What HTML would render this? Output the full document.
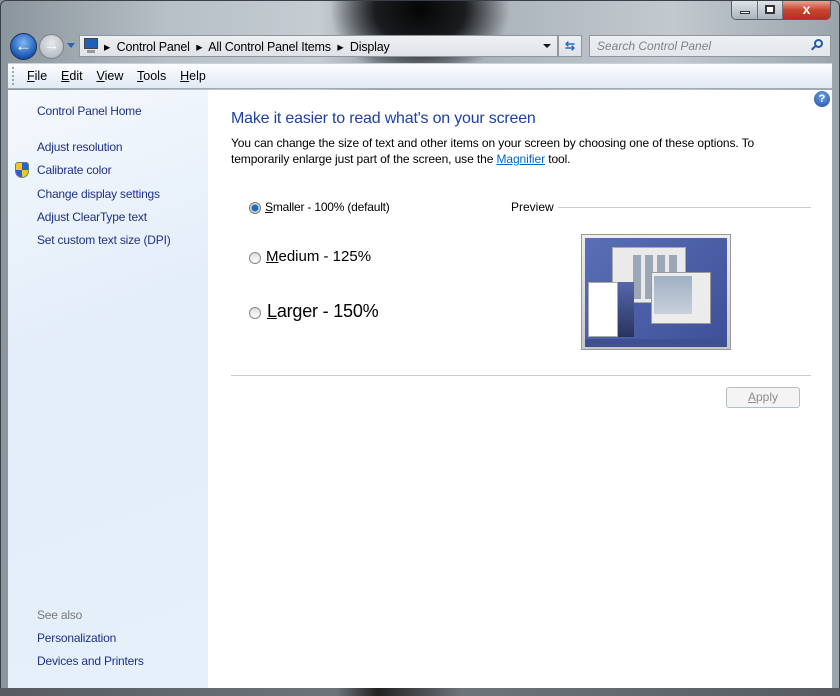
<!DOCTYPE html>
<html><head><style>
*{margin:0;padding:0;box-sizing:border-box}
body{width:840px;height:696px;overflow:hidden;font-family:"Liberation Sans",sans-serif;font-size:12px;position:relative;
background:radial-gradient(ellipse 90px 70px at 420px 10px,#050505 0%,#1a1c1e 50%,rgba(60,64,68,0) 100%),linear-gradient(90deg,#8a949c 0%,#b7c0c7 20%,#c5ccd2 38%,#9aa2a9 45%,#aeb6bd 60%,#c2c9cf 80%,#9aa4ac 100%);}
.abs{position:absolute}
.t{white-space:nowrap}
a{color:#0066cc}
.side a,.side div{position:absolute;left:37px;color:#1e3287;white-space:nowrap;font-size:12px;letter-spacing:-0.2px}
</style></head><body>
<div class="abs" style="left:0;top:0;width:840px;height:696px;border:1px solid #3a4048;border-radius:6px 6px 0 0"></div>
<div class="abs" style="left:0;top:688px;width:840px;height:8px;background:linear-gradient(90deg,#555b61,#6d747a 40%,#222 45%,#6d747a 55%,#555b61)"></div>
<div class="abs" style="left:731px;top:1px;width:100px;height:19px;border:1px solid #555d66;border-top:none;border-radius:0 0 5px 5px;overflow:hidden;display:flex">
 <div style="width:26px;background:linear-gradient(#dfe4e9,#a9b3bd);border-right:1px solid #6b737c;position:relative"><div class="abs" style="left:8px;top:10px;width:10px;height:3px;background:#fff;border:1px solid #333"></div></div>
 <div style="width:25px;background:linear-gradient(#dfe4e9,#a9b3bd);border-right:1px solid #6b737c;position:relative"><div class="abs" style="left:7px;top:4px;width:10px;height:9px;border:2px solid #333;background:#fff"></div></div>
 <div style="flex:1;background:linear-gradient(#e8a493,#c8452e 50%,#b3321d);color:#fff;font-weight:bold;font-size:14px;text-align:center;line-height:17px">x</div>
</div>
<div class="abs" style="left:10px;top:33px;width:27px;height:27px;border-radius:50%;background:radial-gradient(circle at 50% 35%,#7fb6f0,#1a56b8 70%,#0d2f75);border:1px solid #1c2f5a;color:#fff;font-weight:bold;font-size:17px;text-align:center;line-height:24px">&#8592;</div>
<div class="abs" style="left:39px;top:34px;width:25px;height:25px;border-radius:50%;background:radial-gradient(circle at 50% 35%,#e6e9ec,#aab1b8);border:1px solid #7c848c;color:#fff;font-size:15px;text-align:center;line-height:22px">&#8594;</div>
<div class="abs" style="left:67px;top:43px;width:0;height:0;border-left:4px solid transparent;border-right:4px solid transparent;border-top:5px solid #2e62b3"></div>
<div class="abs" style="left:79px;top:35px;width:479px;height:22px;background:linear-gradient(#eef0f2,#dfe3e7);border:1px solid #8e979f"></div>
<div class="abs" style="left:84px;top:38px;width:14px;height:11px;background:#1f5fb8;border:1px solid #444"></div>
<div class="abs" style="left:87px;top:50px;width:8px;height:3px;background:#999"></div>
<div class="abs t" style="left:104px;top:39px;font-size:12.5px;color:#000;letter-spacing:-0.2px">▸&nbsp; Control Panel &nbsp;▸&nbsp; All Control Panel Items &nbsp;▸&nbsp; Display</div>
<div class="abs" style="left:543px;top:44px;border-left:4px solid transparent;border-right:4px solid transparent;border-top:4px solid #111"></div>
<div class="abs" style="left:558px;top:35px;width:24px;height:22px;background:linear-gradient(#eef0f2,#dfe3e7);border:1px solid #8e979f;color:#2c6bc4;font-size:12px;text-align:center;line-height:20px;font-weight:bold">⇆</div>
<div class="abs" style="left:589px;top:35px;width:242px;height:22px;background:linear-gradient(#eef0f2,#e2e6ea);border:1px solid #8e979f"></div>
<div class="abs t" style="left:597px;top:39px;font-style:italic;color:#7d848a;font-size:12px">Search Control Panel</div>
<div class="abs" style="left:814px;top:39px;width:9px;height:9px;border:2px solid #1f5aa8;border-radius:50%"></div>
<div class="abs" style="left:811px;top:47px;width:5px;height:2px;background:#1f5aa8;transform:rotate(-45deg)"></div>
<div class="abs" style="left:8px;top:63px;width:824px;height:26px;background:linear-gradient(#fbfcfe,#e1e9f4);border-bottom:1px solid #a0aab5;border-top:1px solid #c9d2dc"></div>
<div class="abs" style="left:12px;top:67px;width:2px;height:18px;border-left:2px dotted #9aa"></div>
<div class="abs t" style="left:27px;top:69px;font-size:12.5px;color:#000"><u>F</u>ile&nbsp;&nbsp;&nbsp; <u>E</u>dit&nbsp;&nbsp;&nbsp; <u>V</u>iew&nbsp;&nbsp;&nbsp; <u>T</u>ools&nbsp;&nbsp;&nbsp; <u>H</u>elp</div>
<div class="abs" style="left:8px;top:90px;width:200px;height:598px;background:linear-gradient(160deg,#f4f8fd,#e3edf9 40%,#e6f0fb)"></div>
<div class="side">
<a style="top:104px">Control Panel Home</a>
<a style="top:140px">Adjust resolution</a>
<a style="top:163px">Calibrate color</a>
<a style="top:187px">Change display settings</a>
<a style="top:210px">Adjust ClearType text</a>
<a style="top:233px">Set custom text size (DPI)</a>
<div style="top:608px;color:#777">See also</div>
<a style="top:631px">Personalization</a>
<a style="top:654px">Devices and Printers</a>
</div>
<div class="abs" style="left:15px;top:162px;width:14px;height:16px;border-radius:3px 3px 7px 7px;background:conic-gradient(#2a62c8 0 25%,#f2c81e 0 50%,#2a62c8 0 75%,#f2c81e 0);border:1px solid #6b7a99"></div>
<div class="abs" style="left:208px;top:90px;width:624px;height:598px;background:#fff"></div>
<div class="abs" style="left:814px;top:91px;width:16px;height:16px;border-radius:50%;background:radial-gradient(circle at 50% 35%,#6fa3e8,#1b4fa3);color:#fff;font-weight:bold;font-size:11px;text-align:center;line-height:16px">?</div>
<div class="abs t" style="left:231px;top:110px;font-size:16px;color:#1e3fa8;letter-spacing:-0.2px">Make it easier to read what's on your screen</div>
<div class="abs" style="left:231px;top:135px;width:560px;font-size:12px;line-height:16px;color:#000;letter-spacing:-0.1px">You can change the size of text and other items on your screen by choosing one of these options. To temporarily enlarge just part of the screen, use the <a style="text-decoration:underline">Magnifier</a> tool.</div>
<div class="abs" style="left:249px;top:202px;width:12px;height:12px;border-radius:50%;border:1px solid #777;background:radial-gradient(circle,#1c6fb5 0 3px,#ddd 4px)"></div>
<div class="abs t" style="left:265px;top:200px;font-size:12px;letter-spacing:-0.2px"><u>S</u>maller - 100% (default)</div>
<div class="abs" style="left:249px;top:252px;width:12px;height:12px;border-radius:50%;border:1px solid #888;background:linear-gradient(#ddd,#fff)"></div>
<div class="abs t" style="left:266px;top:248px;font-size:15px"><u>M</u>edium - 125%</div>
<div class="abs" style="left:249px;top:307px;width:12px;height:12px;border-radius:50%;border:1px solid #888;background:linear-gradient(#ddd,#fff)"></div>
<div class="abs t" style="left:267px;top:301px;font-size:18px;letter-spacing:-0.2px"><u>L</u>arger - 150%</div>
<div class="abs t" style="left:511px;top:200px;font-size:12px">Preview</div>
<div class="abs" style="left:558px;top:207px;width:253px;height:1px;background:#ccc"></div>
<div class="abs" style="left:581px;top:234px;width:150px;height:116px;background:linear-gradient(#eee,#c8c8c8);border:1px solid #999"></div>
<div class="abs" style="left:585px;top:238px;width:142px;height:101px;background:linear-gradient(135deg,#5a6fb5,#3e509a)"></div>
<div class="abs" style="left:585px;top:339px;width:142px;height:8px;background:#3e4f92"></div>
<div class="abs" style="left:612px;top:247px;width:74px;height:56px;background:#eaeaea;border:1px solid #aaa"></div>
<div class="abs" style="left:633px;top:255px;width:48px;height:44px;background:repeating-linear-gradient(90deg,#8a96a8 0 8px,transparent 8px 12px),#eaeaea;opacity:.8"></div>
<div class="abs" style="left:651px;top:272px;width:60px;height:52px;background:#ececec;border:1px solid #999"></div>
<div class="abs" style="left:654px;top:276px;width:38px;height:38px;background:linear-gradient(#9fb0c4,#c8d0da)"></div>
<div class="abs" style="left:588px;top:282px;width:30px;height:55px;background:#fff;border:1px solid #aaa"></div>
<div class="abs" style="left:618px;top:282px;width:16px;height:55px;background:linear-gradient(#5566aa,#2a3460)"></div>
<div class="abs" style="left:231px;top:375px;width:580px;height:1px;background:#ccc"></div>
<div class="abs" style="left:726px;top:387px;width:74px;height:21px;border:1px solid #b6bcc3;border-radius:3px;background:#f4f4f4;color:#8d8d8d;text-align:center;line-height:19px;font-size:12px"><u>A</u>pply</div>
</body></html>
